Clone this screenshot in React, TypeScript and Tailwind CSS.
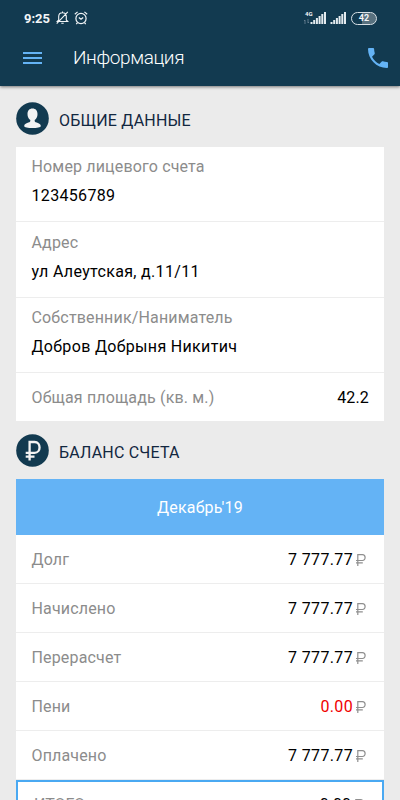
import { type ReactNode } from 'react';

const charges = [
  { label: 'Долг', value: '7 777.77' },
  { label: 'Начислено', value: '7 777.77' },
  { label: 'Перерасчет', value: '7 777.77' },
  { label: 'Пени', value: '0.00', overdue: true },
  { label: 'Оплачено', value: '7 777.77' },
];

function SignalIcon() {
  return (
    <svg className="h-[12px] w-[16px]" viewBox="0 0 16 12" fill="#e4ebef">
      <rect x="0.5" y="10" width="2" height="2" />
      <rect x="3.2" y="8" width="2" height="4" />
      <rect x="5.9" y="6" width="2" height="6" />
      <rect x="8.6" y="4" width="2" height="8" />
      <rect x="11.3" y="2" width="2" height="10" />
      <rect x="14" y="0" width="2" height="12" />
    </svg>
  );
}

function StatusBar() {
  return (
    <div className="flex h-[36px] items-center pl-6 pr-[23px] text-[#f2f5f7]">
      <span className="w-[27px] pt-px text-[13px] font-bold leading-none">9:25</span>
      <svg className="ml-[5px] h-[14px] w-[13px]" viewBox="0 0 13 14" fill="none" stroke="currentColor" strokeWidth="1.1">
        <path d="M1.2 10.5h10.6L10.3 9V5.5C10.3 3.2 9 1.8 6.5 1.8S2.7 3.2 2.7 5.5V9zM5.3 12.3h2.4M6.5.4v1.4M.7 12.6 11.8.8" />
      </svg>
      <svg className="ml-[5px] h-[14px] w-[14px]" viewBox="0 0 14 14" fill="none" stroke="currentColor" strokeWidth="1.2">
        <circle cx="7" cy="7.5" r="5.1" />
        <path d="M.8 3.2 3.6.9M13.2 3.2 10.4.9M4.8 6.5 7 8.3l2.2-1.8M3.5 11.6l-1.2 1.6M10.5 11.6l1.2 1.6" />
      </svg>
      <div className="relative ml-auto mr-[4px] pl-[6px]">
        <span className="absolute left-[1px] -top-[1px] text-[6px] font-bold leading-none">4G</span>
        <svg className="absolute left-0 top-[7px] h-[5px] w-[5px]" viewBox="0 0 5 5" stroke="#71899a" strokeWidth=".8" fill="none">
          <path d="M1 5V1L0 2M4 0v4l1-1" />
        </svg>
        <SignalIcon />
      </div>
      <SignalIcon />
      <div className="ml-[5px] flex h-[13px] w-[26px] items-center justify-center rounded-full border-[1.5px] border-[#d9e1e6] bg-[linear-gradient(90deg,#123a50_42%,#58717f_42%)] text-[9px] font-bold leading-none">
        42
      </div>
    </div>
  );
}

function SectionTitle({ icon, title }: { icon: ReactNode; title: string }) {
  return (
    <div className="flex h-[33px] items-center gap-[10px]">
      {icon}
      <h2 className="pt-[4px] text-[16px] leading-5 tracking-[0.2px] text-[#12273f]">{title}</h2>
    </div>
  );
}

function Field({ label, value }: { label: string; value: string }) {
  return (
    <div className="flex h-[75.4px] flex-col border-b border-[#ededed] pl-[15.5px] pr-[15px] pt-[10.2px]">
      <span className="text-[16px] leading-5 tracking-[0.16px] text-[#8c8c8c]">{label}</span>
      <span className="mt-[9px] text-[16px] leading-5 tracking-[0.33px] text-black">{value}</span>
    </div>
  );
}

function Ruble() {
  return (
    <svg className="ml-[3px] h-[12px] w-[10px]" viewBox="0 0 10 12" fill="none" stroke="#8f8f8f" strokeWidth="1.2">
      <path d="M1.8 12V.6h4.6c3.6 0 3.6 5.9 0 5.9H0M0 8.9h6.8" />
    </svg>
  );
}

export default function App() {
  return (
    <div className="h-[800px] w-[400px] overflow-hidden bg-[#ebebeb] font-['Roboto',sans-serif]">
      <header className="h-[86px] bg-[#123a50] shadow-[0_1px_3px_rgba(0,0,0,0.5)]">
        <StatusBar />
        <div className="flex h-[44px] items-center pl-[23px] pr-[12px]">
          <div className="flex w-[19px] flex-col gap-[3px]">
            <div className="h-[2px] bg-[#64b3f5]" />
            <div className="h-[2px] bg-[#64b3f5]" />
            <div className="h-[2px] bg-[#64b3f5]" />
          </div>
          <h1 className="ml-[31px] text-[19px] font-light leading-6 tracking-[-0.4px] text-white">Информация</h1>
          <svg className="ml-auto h-[20px] w-[20px]" viewBox="3 3 18 18" fill="#64b3f5">
            <path d="M6.62 10.79c1.44 2.83 3.76 5.14 6.59 6.59l2.2-2.2c.27-.27.67-.36 1.02-.24 1.12.37 2.33.57 3.57.57.55 0 1 .45 1 1V20c0 .55-.45 1-1 1C10.61 21 3 13.39 3 4c0-.55.45-1 1-1h3.5c.55 0 1 .45 1 1 0 1.25.2 2.45.57 3.57.11.35.03.74-.25 1.02l-2.2 2.2z" />
          </svg>
        </div>
      </header>

      <main className="px-4 pt-4">
        <SectionTitle
          title="ОБЩИЕ ДАННЫЕ"
          icon={
            <svg className="h-[33px] w-[33px]" viewBox="0 0 33 33">
              <circle cx="16.5" cy="16.5" r="16.3" fill="#123a50" />
              <path
                d="M16.5 6.5c-3.2 0-5 2.2-5 5.4 0 2.8 1 4.8 2.8 6 .2 1.6-.3 2-2 2.6-2.6.9-4 1.7-4.1 3.4 0 1.4 3.9 2.2 8.3 2.2s8.3-.8 8.3-2.2c-.1-1.7-1.5-2.5-4.1-3.4-1.7-.6-2.2-1-2-2.6 1.8-1.2 2.8-3.2 2.8-6 0-3.2-1.8-5.4-5-5.4z"
                fill="#f4f4f4"
              />
            </svg>
          }
        />
        <div className="mt-[12px] h-[274px] bg-white">
          <Field label="Номер лицевого счета" value="123456789" />
          <Field label="Адрес" value="ул Алеутская, д.11/11" />
          <Field label="Собственник/Наниматель" value="Добров Добрыня Никитич" />
          <div className="flex h-[48px] items-center justify-between pl-[15.5px] pr-[15px] pt-[2px] text-[16px] tracking-[0.16px]">
            <span className="text-[#8c8c8c]">Общая площадь (кв. м.)</span>
            <span className="text-black">42.2</span>
          </div>
        </div>

        <div className="mt-[13px]">
          <SectionTitle
            title="БАЛАНС СЧЕТА"
            icon={
              <svg className="h-[33px] w-[33px]" viewBox="0 0 33 33" fill="none">
                <circle cx="16.5" cy="16.5" r="16.3" fill="#123a50" />
                <path d="M13.6 26.5V8h5c6.6 0 6.6 10.8 0 10.8H9.7M9.7 22.6h8.8" stroke="#f4f4f4" strokeWidth="2.3" />
              </svg>
            }
          />
        </div>
        <div className="mt-[12px] flex h-[56px] items-center justify-center bg-[#64b3f5] pt-px text-[16px] tracking-[0.2px] text-white">
          Декабрь'19
        </div>
        <div className="bg-white">
          {charges.map(({ label, value, overdue }) => (
            <div key={label} className="flex h-[49px] items-center border-b border-[#ededed] pl-[15.5px] pr-[18px] pt-px text-[16px] tracking-[0.16px] last:border-b-0">
              <span className="mr-auto text-[#8c8c8c]">{label}</span>
              <span className={overdue ? 'tracking-[0.35px] text-[#f00000]' : 'tracking-[0.35px] text-black'}>{value}</span>
              <Ruble />
            </div>
          ))}
          <div className="flex h-[56px] items-start border-2 border-[#4aa9f2] pl-[16px] pr-[18px] pt-[13px] text-[16px] leading-5">
            <span className="mr-auto text-[#8c8c8c]">ИТОГО</span>
            <span className="text-black">0.00</span>
            <div className="pt-[4px]">
              <Ruble />
            </div>
          </div>
        </div>
      </main>
    </div>
  );
}
